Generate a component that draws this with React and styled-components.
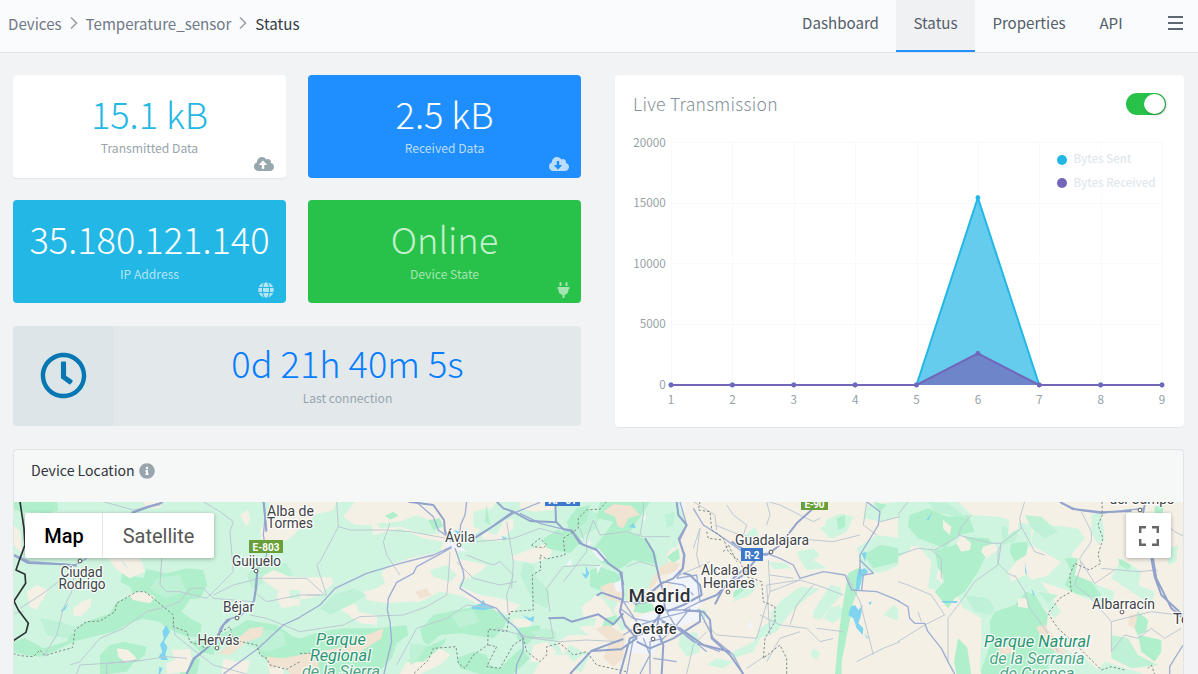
import React from 'react';
import styled, { createGlobalStyle } from 'styled-components';
import {
  FaCloudUploadAlt,
  FaCloudDownloadAlt,
  FaGlobe,
  FaPlug,
  FaRegClock,
  FaInfoCircle,
} from 'react-icons/fa';

const GlobalStyle = createGlobalStyle`
  *, *::before, *::after { box-sizing: border-box; }
  body {
    margin: 0;
    height: 674px;
    overflow: hidden;
    background: #f2f3f5;
    font-family: "Noto Sans CJK SC", "Noto Sans", sans-serif;
    font-size: 15.1px;
    color: #586069;
  }
`;

/* ---------- header ---------- */

const Header = styled.header`
  display: flex;
  justify-content: space-between;
  height: 53px;
  background: #fafbfd;
  border-bottom: 1px solid #e3e5e7;
`;

const Breadcrumb = styled.nav`
  display: flex;
  align-items: center;
  height: 46px;
  padding-left: 8px;
  gap: 8px;
`;

const Crumb = styled.span`
  line-height: 22px;
  color: ${(p) => (p.$current ? '#323a44' : '#6f7985')};
`;

const Chevron = styled.svg`
  width: 8px;
  height: 14px;
  fill: none;
  stroke: #9aa1a9;
  stroke-width: 1.6;
`;

const Tabs = styled.nav`
  display: flex;
`;

const Tab = styled.a`
  width: ${(p) => p.$width}px;
  height: 52px;
  line-height: 45px;
  text-align: center;
  color: #545d68;
  background: ${(p) => (p.$active ? '#f0f1f3' : 'transparent')};
  border-bottom: 2px solid ${(p) => (p.$active ? '#2390fb' : 'transparent')};
`;

const MenuButton = styled.button`
  display: flex;
  flex-direction: column;
  gap: 4px;
  width: 59px;
  padding: 16px 15px 0 29px;
  border: 0;
  background: none;
`;

const MenuBar = styled.span`
  height: 2px;
  background: #5c6772;
`;

/* ---------- dashboard cards ---------- */

const Page = styled.main`
  padding: 22px 14px 0 13px;
`;

const TopRow = styled.section`
  display: flex;
  gap: 34px;
  height: 352px;
`;

const Widgets = styled.div`
  display: grid;
  grid-template-columns: 273px 273px;
  grid-template-rows: 103px 103px 100px;
  column-gap: 22px;
  row-gap: 22px;
  width: 568px;
`;

const StatCard = styled.article`
  position: relative;
  padding-top: 16px;
  border-radius: 4px;
  text-align: center;
  background: ${(p) => p.$bg};
  color: ${(p) => p.$ink};
  box-shadow: ${(p) => (p.$raised ? '0 1px 1px rgba(0, 0, 0, 0.06)' : 'none')};
`;

const Value = styled.div`
  font-size: 36.2px;
  font-weight: 300;
  line-height: 44px;
  color: ${(p) => p.$color || 'inherit'};
`;

const Label = styled.div`
  margin-top: ${(p) => p.$gap ?? 4}px;
  font-size: 12.15px;
  line-height: 18px;
  color: ${(p) => p.$color || '#98a5ac'};
`;

const Corner = styled.span`
  position: absolute;
  right: ${(p) => p.$right}px;
  bottom: ${(p) => p.$bottom}px;
  display: flex;
  color: ${(p) => p.$color};

  svg {
    width: ${(p) => p.$width}px;
    height: 16px;
  }
`;

const LastSeen = styled.article`
  grid-column: 1 / -1;
  display: flex;
  margin-top: 1px;
  height: 100px;
  border-radius: 4px;
  overflow: hidden;
  background: #e3e9eb;
`;

const ClockBox = styled.div`
  display: flex;
  align-items: center;
  justify-content: center;
  width: 101px;
  padding-bottom: 2px;
  background: #dce6e9;
  border-right: 1px solid #dfe5e8;
  color: #0677b3;

  svg {
    width: 47px;
    height: 47px;
  }
`;

const LastSeenText = styled.div`
  flex: 1;
  padding-top: 14px;
  text-align: center;
`;

const ChartCard = styled.article`
  flex: 1;
  border-radius: 4px;
  background: #fff;
  box-shadow: 0 1px 1px rgba(0, 0, 0, 0.06);
`;

const ChartHead = styled.div`
  display: flex;
  align-items: center;
  justify-content: space-between;
  height: 58px;
  padding: 0 18px 0 18px;
`;

const ChartTitle = styled.h2`
  margin: 0;
  font-size: 17.6px;
  font-weight: 300;
  line-height: 24px;
  letter-spacing: 0.25px;
  color: #84919a;
`;

const Switch = styled.span`
  display: flex;
  justify-content: flex-end;
  width: 40px;
  height: 22px;
  padding: 1px;
  border-radius: 11px;
  background: #28c24b;
`;

const Knob = styled.span`
  width: 21px;
  height: 20px;
  border-radius: 50%;
  background: #fff;
  box-shadow: 1px 1px 3px rgba(0, 0, 0, 0.3);
`;

const ChartSvg = styled.svg`
  display: block;
  width: 569px;
  height: 290px;
  font-size: 11.7px;
  fill: #969fa6;
`;

/* ---------- location card ---------- */

const LocationCard = styled.section`
  margin-top: 22px;
  height: 225px;
  border: 1px solid #dfe5e7;
  border-bottom: 0;
  border-radius: 4px 4px 0 0;
  overflow: hidden;
  background: #f6f8f8;
`;

const LocationHead = styled.div`
  display: flex;
  align-items: center;
  gap: 4px;
  height: 52px;
  padding: 0 0 10px 17px;
  font-size: 14.1px;
  line-height: 20px;
  color: #30363b;

  svg {
    width: 16px;
    height: 16px;
    color: #98a5ac;
  }
`;

const HeadText = styled.span`
  height: 22px;
`;

const MapFrame = styled.div`
  position: relative;
  height: 172px;
`;

const MapSvg = styled.svg`
  display: block;
  width: 1169px;
  height: 172px;
  font-family: Roboto, sans-serif;
`;

const MapTypes = styled.div`
  position: absolute;
  top: 11px;
  left: 11px;
  display: flex;
  height: 45px;
  background: #fff;
  border-radius: 2px;
  box-shadow: 0 1px 4px rgba(0, 0, 0, 0.3);
  font-family: Roboto, sans-serif;
  font-size: 20px;
  line-height: 45px;
  text-align: center;
`;

const MapType = styled.button`
  width: ${(p) => p.$width}px;
  padding: 1px 0 0 ${(p) => (p.$active ? 1 : 0)}px;
  border: 0;
  border-left: ${(p) => (p.$active ? '0' : '1px solid #e6e6e6')};
  background: none;
  font: inherit;
  font-weight: ${(p) => (p.$active ? 500 : 400)};
  color: ${(p) => (p.$active ? '#000' : '#565656')};
`;

const Fullscreen = styled.button`
  position: absolute;
  top: 11px;
  right: 12px;
  display: flex;
  align-items: center;
  justify-content: center;
  width: 45px;
  height: 45px;
  padding: 0;
  border: 0;
  border-radius: 2px;
  background: #fff;
  box-shadow: 0 1px 4px rgba(0, 0, 0, 0.3);

  svg {
    width: 20px;
    height: 20px;
    fill: none;
    stroke: #666;
    stroke-width: 2.4;
  }
`;

const Separator = () => (
  <Chevron viewBox="0 0 8 14">
    <path d="M1 1.5 6.5 7 1 12.5" />
  </Chevron>
);

/* ---------- chart ---------- */

const PLOT = { left: 56, right: 547, top: 9.5, bottom: 252 };
const SENT = [0, 0, 0, 0, 0, 15450, 0, 0, 0];
const RECEIVED = [0, 0, 0, 0, 0, 2600, 0, 0, 0];
const px = (i) => PLOT.left + ((PLOT.right - PLOT.left) / 8) * i;
const py = (v) => PLOT.bottom - ((PLOT.bottom - PLOT.top) * v) / 20000;
const line = (d) => d.map((v, i) => `${px(i)},${py(v)}`).join(' ');

const Series = ({ data, color, opacity }) => (
  <g>
    <polygon
      points={`${px(0)},${PLOT.bottom} ${line(data)} ${px(8)},${PLOT.bottom}`}
      fill={color}
      fillOpacity={opacity}
    />
    <polyline points={line(data)} fill="none" stroke={color} strokeWidth="2" />
    {data.map((v, i) => (
      <circle key={i} cx={px(i)} cy={py(v)} r="2.4" fill={color} />
    ))}
  </g>
);

const LiveChart = () => (
  <ChartSvg viewBox="0 0 569 290">
    <g stroke="#f7f9fa" strokeWidth="1">
      {SENT.map((_, i) => (
        <line key={i} x1={Math.round(px(i)) + 0.5} x2={Math.round(px(i)) + 0.5} y1="9" y2="252" />
      ))}
      {[5000, 10000, 15000, 20000].map((v) => (
        <line key={v} x1="56" x2="548" y1={Math.floor(py(v)) + 0.5} y2={Math.floor(py(v)) + 0.5} />
      ))}
    </g>
    <g textAnchor="end">
      {[0, 5000, 10000, 15000, 20000].map((v) => (
        <text key={v} x="50.8" y={py(v) + 4}>{v}</text>
      ))}
    </g>
    <g textAnchor="middle">
      {SENT.map((_, i) => (
        <text key={i} x={px(i)} y="270.6">{i + 1}</text>
      ))}
    </g>
    <Series data={SENT} color="#23b7e5" opacity="0.7" />
    <Series data={RECEIVED} color="#7266ba" opacity="0.7" />
    <rect x="440" y="15" width="104" height="47" fill="#fff" fillOpacity="0.85" />
    <circle cx="447" cy="27" r="5" fill="#23b7e5" />
    <circle cx="447" cy="50" r="5" fill="#7266ba" />
    <g fill="#dfe7ed" fontSize="11.5" fontWeight="500">
      <text x="458.5" y="30">Bytes Sent</text>
      <text x="458.5" y="54">Bytes Received</text>
    </g>
  </ChartSvg>
);

/* ---------- map ---------- */

const MINT = '#cff5e0';
const GREEN = '#b0efcb';
const MID = '#bff1d6';
const SAND = '#f5f0e6';
const TAN = '#f0e3d2';
const WATER = '#7fd4ef';
const URBAN = '#f1f4f8';

/* Each map sheet is drawn on a 900-unit grid at a third of a pixel per unit. */
const SHEETS = [
  {
    x: 0,
    base: MINT,
    areas: [
      [GREEN, 'M40 20H170L175 45 150 55 75 50 40 44Z M365 235 430 250 440 222 500 235 560 220 610 225 622 270 600 310 570 312 545 350 570 370 605 388 600 425 560 425 500 400 480 380 430 372 400 380 340 410 300 420 220 440 160 470 120 485 70 478 40 470V440L75 430 130 460 200 440 220 400 260 380 330 355 350 320 400 300 390 275 362 262Z M640 430 700 400 740 375 830 390 880 425 900 430V480L860 520 800 500 770 460 720 440 660 455Z M300 480 330 450 370 440 440 455 435 480 400 505 380 530 320 537H300Z M570 440 620 430 650 450 640 480 600 470Z M545 500 600 490 590 537H540Z'],
      [MID, 'M120 370 180 380 240 400 200 430 140 420Z M470 250 540 240 560 290 500 310 450 280Z M740 240 780 200 860 205 880 240 800 260 755 280Z M760 400 850 410 860 450 800 470 740 450Z'],
      [SAND, 'M80 290 110 270 145 285 130 310 110 345 90 335Z M220 340 245 320 275 310 272 335 240 365 220 360Z M325 190 420 190 435 230 390 250 350 225Z M385 300 425 288 465 305 450 325 400 315Z M745 45 720 60 740 95 750 75Z M810 20H901V100L870 130 830 150 785 140 780 105 800 70Z M430 20H490L480 38 440 40Z M780 250 820 225 870 245 901 247V285L830 285Z M835 285 870 285 868 310 901 312V330L845 340 830 310Z M350 460 385 465 410 490 380 505 355 485Z M515 465 570 462 575 490 560 530 500 537 500 505 525 495Z M670 490 710 500 750 495 740 537H665Z M800 490 850 505 850 537H810Z M40 90 60 110 70 180 42 150Z'],
      [TAN, 'M695 445 750 400 790 395 785 425 740 440 690 480 655 475Z M800 485 850 490 901 480V537H870L850 515 810 520Z'],
      [WATER, 'M498 390 510 410 492 440 502 455 496 480 504 495 485 495 476 485 487 470 480 450 492 430 487 410Z M478 515 488 520 480 537H476Z M205 325 180 350 195 345Z M360 190 385 220 375 210Z'],
    ],
    minor: 'M310 20 400 45 480 30 M610 20 660 50 700 80 690 110 700 230 620 310 540 290 500 290 480 270 485 190 M640 300 700 270 780 250 900 250 M130 485 170 420 190 340 215 290 225 225 M60 340 130 295 200 240 M210 510 240 500 300 430 370 400 440 350 500 335 540 320 570 280 610 280 640 310 760 320 M40 355 70 350 M230 537 240 510 400 500 500 485 560 490 M750 360 800 370 900 410 M320 537 320 505 420 495 M520 380 525 420 600 480 640 510 740 537 M760 290 800 320 900 300',
    road: 'M395 52 440 35 490 22 M40 178 90 200 180 207 225 210 260 190 M790 20 795 70 790 120 800 180 772 225 770 280 760 320 725 360 680 375 660 400 650 440 620 460 580 490 560 537 M900 367 850 390 775 460 720 500 670 537',
    heavy: 'M395 54 445 36 485 24 M40 180 85 204 190 208 230 212 M791 20 796 70 799 110 M772 228 766 290 762 320 M690 372 670 390 652 430 M620 460 582 492 560 537',
    border: 'M60 20 66 60 72 100 75 150 60 190 48 225 75 238 77 265 42 318 55 345 85 385 78 412 40 437',
    dash: 'M40 475 60 482 100 485 120 465 135 482 180 468 218 458 225 405 260 380 300 378 345 350 350 325 410 290 435 290 460 310 520 360 520 395 560 410 570 440 620 460 655 415 690 395 700 435 770 450 780 480 800 490 810 510 860 523 900 500',
  },
  {
    x: 300,
    base: MINT,
    areas: [
      [SAND, 'M0 20H110L100 45 40 60 30 95 0 100Z M130 65 165 20H590L560 60 545 130 600 140 640 100 640 70 560 90 520 120 490 125 470 190 560 210 540 230 505 250 470 270 540 300 600 310 660 330 630 360 590 350 540 330 480 300 420 290 360 320 310 320 260 325 200 315 190 290 230 280 255 265 245 235 270 210 330 190 420 170 430 140 370 130 300 100 260 110 220 120 215 90 165 90Z M0 247 95 247 100 265 60 300 20 312 0 312Z M118 310 170 330 175 350 232 362 230 390 180 385 125 345Z M700 160 740 145 755 165 750 185 700 205 640 195 630 185Z M810 400 880 390 870 420 890 440 860 460 800 460 780 440 820 430Z M700 450 740 440 770 470 740 500 690 500Z M660 20H770L760 45 700 50 660 40Z M350 480 420 460 450 480 420 510 360 537H300L320 500Z M740 480 860 480 820 520 850 537H700L720 500Z M640 370 700 375 690 395 640 395Z'],
      [MINT, 'M230 85 300 80 350 60 400 80 420 115 380 120 300 95 240 100Z M390 225 440 210 470 240 450 260 400 245Z M520 50 560 40 620 60 590 120 520 95Z'],
      [GREEN, 'M0 430 60 410 130 400 230 400 320 390 325 420 290 445 275 490 230 537H0Z M360 405 400 360 470 345 560 330 625 370 610 400 580 430 480 415 420 420 385 450 370 440Z M740 125 770 105 830 110 825 150 790 175 770 150 730 140Z M655 400 720 390 720 410 680 450 650 430Z M255 62 280 50 295 62 270 74Z M385 75 420 70 430 95 400 105Z M560 30 570 90 555 80Z M470 490 520 470 560 480 570 510 600 520 640 480 665 460 690 490 640 537H540L480 520Z M320 500 370 460 440 430 430 450 370 500Z'],
      [MID, 'M60 340 100 300 160 280 200 300 150 330 90 360Z M330 445 380 450 350 500 330 510Z M700 210 710 250 750 290 740 340 700 320 660 240 670 200Z M690 410 740 400 800 420 740 440Z M450 355 520 345 540 380 480 400Z'],
      [TAN, 'M130 455 200 420 250 400 245 430 180 470 90 475 50 485 60 537H0V480Z M345 290 380 280 395 300 360 312Z'],
      [WATER, 'M515 335 545 325 550 313 558 332 590 338 550 345 515 342Z M668 360 690 370 702 362 700 382 685 375Z M605 122 620 130 612 137Z M460 105 480 110 475 120Z'],
      [URBAN, 'M435 130 470 140 500 170 460 165 440 155Z M800 205 815 190 812 212Z'],
    ],
    minor: 'M110 20 115 95 60 200 50 210 80 300 20 300 M0 250 20 250 70 295 M115 95 150 105 260 105 330 110 440 130 M270 85 250 140 260 180 300 240 M500 180 550 200 580 210 600 200 640 240 620 300 625 360 M530 140 640 130 720 100 790 120 M620 80 630 140 640 200 635 280 M450 170 445 250 440 300 380 335 310 360 180 365 130 390 0 410 M290 510 350 400 440 370 500 330 580 340 M880 75 860 130 860 170 790 260 M840 100 850 130 M790 215 850 210 900 212 M790 215 740 280 750 350 M750 370 760 430 660 425 M590 400 700 430 780 440 860 435 960 440 M0 300 60 300 M470 200 520 250 600 270 650 260',
    road: 'M0 366 60 330 105 280 200 235 300 205 400 180 455 155 M455 158 350 215 340 235 290 262 265 310 262 345 270 380 275 440 265 480 252 537 M465 160 490 230 492 250 480 280 550 325 590 340 620 375 645 395 668 425 670 465 650 510 648 537 M350 22 400 65 415 105 450 130 M500 20 495 60 482 90 478 130 M525 130 570 100 640 55 700 30 720 22 M660 55 720 85 780 100 815 105 850 150 890 163',
    heavy: 'M325 20 400 30 432 75 435 110 455 140 M525 128 575 96 640 50 M590 20 610 40 640 50 690 78 770 82 M766 20 768 80 790 103 815 108 840 145 890 165 925 205 960 230 970 270 M745 370 790 368 815 380 895 358 940 388 970 355 M890 302 905 293 970 315 M810 537 875 467 970 432 M875 468 960 463',
    dash: 'M920 20 900 42 860 45 835 70 835 100 790 130 795 180 740 192 720 180 722 225 697 240 700 345 630 350 620 410 565 402 563 450 520 480 495 520 475 505 468 455 400 460 385 495 340 537 M565 450 590 455 560 515 600 520 640 450 670 430 680 470 720 500 740 480 740 455 780 445 820 480 860 470 890 510 980 530 M695 150 720 130 740 150 730 158 700 155Z M0 475 30 475 60 495',
  },
  {
    x: 600,
    base: SAND,
    areas: [
      [MINT, 'M0 20H120L110 60 120 100 180 150 210 205 170 260 130 290 70 320 0 300Z M120 20H240L250 110 200 180 160 150 130 110Z M140 20H245L255 90 230 160 180 150 120 100Z M425 130 465 95 475 120 450 145Z M505 200 560 205 570 220 520 222Z M590 170 640 160 660 180 640 195 680 220 620 225 600 195Z M410 300 480 260 450 300 400 320Z M545 315 580 290 600 275 660 280 620 310 570 355 530 410 480 430 460 470 400 490 400 470 460 440 480 400 510 380 515 350Z M690 340 720 330 730 360 700 385 670 370Z M640 350 690 270 720 275 725 300 680 350 660 375 640 370Z M680 75 720 55 760 65 740 110 700 130 675 100Z M660 100 700 85 720 120 690 130Z M770 160 830 120 900 130V210L840 235 790 225Z M240 420 290 410 300 470 260 485 235 450Z M290 340 320 345 315 375 290 370Z M640 460 660 475 650 495 630 480Z M350 490 400 500 370 520 320 510Z M800 30 900 20V60L850 80 790 70Z M850 360 880 330 900 345V380Z'],
      [GREEN, 'M790 180 840 150 900 160V200L820 220Z M745 235 780 215 790 250 760 320 745 400 725 500 725 537H705L715 430 725 350Z M710 70 735 60 735 95 715 105Z M195 90 215 80 222 105 205 115Z M110 320 150 310 165 345 130 355 100 350Z M200 185 235 160 240 190 220 205Z M400 290 440 265 440 280 400 310Z M820 20 860 30 840 50Z'],
      [TAN, 'M180 215 210 200 240 205 225 235 185 240 150 285 140 260Z'],
      [URBAN, 'M205 240 230 225 245 245 300 250 310 320 290 345 310 370 250 390 220 410 190 390 180 440 160 480 80 470 75 440 110 420 90 380 140 355 190 350 160 330 185 290 220 280Z M455 170 500 160 530 175 500 195 470 190Z M380 250 440 245 400 280 370 275Z M440 390 455 380 460 405Z M130 135 145 130 150 155 135 155Z M230 20 260 25 250 55Z'],
      [WATER, 'M775 225 795 220 805 232 785 245 778 285 767 285 770 250Z M752 335 765 330 775 345 788 330 782 365 775 385 790 400 788 420 770 400 760 370 745 360Z M792 415 808 432 800 428Z M785 175 800 170 795 200Z M805 325 815 318 812 330Z'],
    ],
    minor: 'M280 20 345 60 350 105 M505 20 540 30 600 60 640 80 660 70 M500 90 510 60 500 20 M345 90 420 120 480 130 M430 120 440 90 400 60 380 30 M600 255 500 270 510 420 M510 290 600 255 650 270 730 300 M505 195 510 290 470 430 350 420 310 380 M480 360 540 390 620 400 660 440 700 430 M570 390 590 330 640 270 M300 220 290 180 300 100 280 160 M240 240 330 200 M510 240 580 250 M500 500 540 430 600 410 M740 240 780 320 800 400 820 480 M770 500 850 460 900 440 M840 80 900 65 M580 130 700 140 780 120 M320 410 280 450 260 537 M-20 75 0 120 80 110 130 125 210 125 M130 20 130 60 120 120 M730 410 650 400 M440 520 500 480 M800 20 790 90 830 120 M80 215 120 200 170 215',
    road: 'M240 20 260 90 235 130 255 180 250 220 230 250 M280 40 310 90 350 115 400 150 M400 150 440 180 500 175 540 190 580 210 600 250 670 230 735 240 755 285 830 290 880 310 900 320 M800 20 840 50 835 90 780 180 780 240 M780 195 820 235 790 240 785 285 M70 420 120 390 180 370 260 350 300 345 M300 350 340 430 400 480 430 537 M110 420 110 380 70 320 M230 250 290 240 300 320 250 345 190 345 M175 370 250 410 320 470 M100 430 80 537 M130 430 150 480 120 537 M190 430 150 440 150 537 M160 490 230 500 M60 340 100 370 150 380 M200 350 230 400 280 440 360 470 M270 340 230 390 180 440 M65 250 70 320 130 325 180 300 M140 300 190 260 250 270 280 300',
    heavy: 'M135 130 160 170 178 250 190 290 195 345 M230 20 235 60 260 90 238 135 252 180 248 220 220 250 185 265 145 300 105 330 M65 230 70 300 60 350 75 390 110 430 60 465 M180 350 170 400 190 450 185 537 M250 235 270 240 300 270 305 300 250 330 200 350 M250 345 310 350 330 375 335 430 390 480 430 537 M180 360 140 410 90 430 60 537 M185 380 240 400 310 450 390 470 M345 328 370 280 430 240 470 190 M300 320 350 300 400 250 440 215 M500 180 540 150 590 85 640 40 M395 140 440 170 500 180 M110 440 150 460 220 430 300 380 300 345',
    dash: 'M300 20 295 45 330 50 335 105 370 130 385 170 420 200 440 245 485 260 490 320 525 335 525 380 495 430 490 490 540 450 560 490 560 537 M370 170 385 150 410 200 M320 110 325 130 370 135',
  },
  {
    x: 898,
    base: SAND,
    areas: [
      [MINT, 'M0 20H180L220 60 300 65 400 90 400 150 330 230 340 260 380 240 450 240 490 200 470 190 400 150 405 110 460 90 540 100 560 130 520 180 540 200 530 240 600 270 650 290 640 330 560 310 520 290 430 260 490 350 470 370 420 320 400 360 450 430 530 480 620 500 740 537H245L250 440 190 330 160 250 130 290 90 280 100 200 60 150 0 190Z M580 60 610 50 620 130 600 150 580 110Z M670 190 730 230 720 270 770 290 760 330 700 290 640 250Z M810 160 840 150 835 200 810 210Z M600 310 640 320 600 345Z'],
      [GREEN, 'M35 60 90 40 150 65 210 60 230 110 180 120 140 160 60 130 30 95Z M110 165 170 150 200 125 270 130 300 160 260 190 240 230 200 290 170 310 150 340 110 290 140 260 120 220Z M290 350 350 330 385 290 410 300 450 360 445 400 480 450 440 537H245L280 440 275 380Z M500 190 540 190 530 240 580 260 610 300 590 310 530 295 500 270 520 230Z M340 145 390 140 385 180 350 200 335 170Z M720 350 750 375 745 410 720 420 700 380Z M720 420 790 435 790 470 770 500 730 470Z M180 430 210 460 220 537H175L168 500Z M770 35 795 30 795 65 770 60Z M660 190 700 210 690 225 665 210Z'],
      [MID, 'M90 20 150 25 210 70 160 60 110 50Z M200 300 270 310 290 340 280 360 230 350Z M380 60 430 65 480 110 440 130 400 100Z M640 420 690 430 720 480 780 510 700 520 640 490Z M310 90 360 110 350 140 315 150Z M420 290 480 300 450 325Z'],
      [SAND, 'M385 195 410 205 455 205 455 240 400 255 380 230Z M335 60 365 55 360 100 330 120Z M135 75 160 95 155 120 135 100Z M190 120 220 145 215 165 190 170 175 145Z M255 155 290 145 300 165 265 190 250 170Z M40 150 70 165 65 200 40 210 30 180Z M120 220 135 240 130 265 115 250Z M360 310 385 310 390 340 360 335Z M200 340 250 370 250 440 235 480 250 537H220L205 440 185 400Z M560 490 620 500 600 525Z'],
      [TAN, 'M415 395 440 390 480 440 520 490 470 470 430 430Z M695 360 720 355 710 400 690 390Z M300 455 340 450 350 475 310 480Z'],
      [WATER, 'M103 50 85 75 92 75Z M380 200 387 240 382 235Z M400 278 412 303 405 300Z M130 318 178 318 178 324 135 323Z'],
    ],
    minor: 'M0 60 30 20 M0 180 60 160 110 165 180 125 190 95 220 60 M180 120 280 145 310 145 M380 20 365 70 370 100 310 145 300 170 300 205 330 235 350 245 M310 145 300 210 230 260 195 310 150 370 150 500 M370 95 410 170 440 180 M350 240 380 290 395 340 440 400 480 470 M550 50 580 110 580 140 545 190 550 210 530 270 570 300 640 380 760 350 840 360 M610 220 720 230 780 225 M550 200 590 265 650 225 M795 80 830 110 860 125 M80 390 140 360 100 300 30 270 0 260 M60 350 70 380 M100 165 130 190 130 250 M640 380 640 430 640 470 680 420 720 430 760 400 800 430 850 400 M0 440 80 390',
    road: 'M0 318 30 335 35 370 50 385 80 385 90 410 130 460 150 500 170 537 M490 25 540 45 610 55 690 45 740 40 M855 450 815 515 815 537',
    heavy: 'M485 20 525 42 610 52 700 48 M765 190 775 250 795 290 820 340 850 365 M760 190 770 245 790 300 855 360 M740 30 735 55',
    dash: 'M612 20 613 60 600 90 615 130 600 180 608 205 575 225 530 205 515 240 520 290 485 310 450 355 480 400 545 460 610 525 640 515 680 525 M750 520 760 510 770 537',
  },
];

/* Sierra de Guadarrama and the western outskirts of Madrid, across two sheets. */
const SIERRA = {
  x: 480,
  areas: [
    [MINT, 'M240 20H600L590 100 560 180 530 230 500 280 460 330 430 300 400 345 440 400 420 410 370 370 330 370 300 400 340 430 320 470 280 500 230 440 220 300 240 200Z'],
    [SAND, 'M305 335 350 300 370 315 390 340 420 400 440 440 450 500 440 540H300L330 480 270 450 250 480 230 440 270 420 330 420 350 370 310 365Z'],
    [MID, 'M270 60 320 40 360 60 350 100 300 130 270 110Z M555 60 585 50 580 90 560 100Z'],
    [GREEN, 'M360 20H510L485 60 450 110 490 130 530 180 530 208 460 195 415 225 360 200 340 160 380 110 400 80 350 70Z M330 225 360 215 415 235 425 265 370 290 330 275Z M190 130 240 110 285 100 300 145 270 175 200 160Z M365 400 375 370 410 360 410 385 380 405Z M290 40 330 30 320 80 270 110 260 80Z'],
    [TAN, 'M370 50 400 28 455 32 480 60 445 70 430 100 412 92 405 65Z M360 275 395 262 430 285 430 325 375 310Z M345 400 385 390 435 420 430 490 400 515 370 490 390 440Z'],
    [MINT, 'M420 228 465 197 530 210 510 270 460 292 430 262Z'],
    [URBAN, 'M335 165 355 160 380 190 365 200 345 180Z M258 210 275 190 273 214Z M485 65 498 60 495 80Z M350 215 365 210 352 238Z M315 130 335 145 320 155Z M400 265 425 255 430 290 410 290Z'],
    [WATER, 'M305 235 318 238 317 212 328 235 318 252Z M447 97 459 84 468 99Z'],
  ],
};

const Grid = ({ x, children }) => (
  <g transform={`translate(${x} 495) scale(0.33333)`} fill="none" strokeLinejoin="round">
    {children}
  </g>
);

const Land = ({ sheet }) => (
  <Grid x={sheet.x}>
    {sheet.base && <path d="M0 0H901V540H0Z" fill={sheet.base} />}
    {sheet.areas.map(([color, d], i) => (
      <path key={i} d={d} fill={color} />
    ))}
  </Grid>
);

const Roads = ({ sheet }) => (
  <Grid x={sheet.x}>
    <path d={sheet.minor} stroke="#bcc9d2" strokeWidth="3" />
    <path d={sheet.road} stroke="#9eaed3" strokeWidth="4" />
    <path d={sheet.heavy} stroke="#92a3cb" strokeWidth="6" />
    <path d={sheet.dash} stroke="#7d8a87" strokeWidth="3" strokeDasharray="7 6" />
    {sheet.border && <path d={sheet.border} stroke="#2c3333" strokeWidth="5" />}
  </Grid>
);

const PLACES = [
  ['Alba de', 290.5, 516, 47],
  ['Tormes', 290, 528, 46],
  ['Guijuelo', 256.5, 566, 49],
  ['Ciudad', 81.5, 577, 42],
  ['Rodrigo', 82, 588.5, 47],
  ['Béjar', 238.5, 612, 31],
  ['Hervás', 218.5, 645, 42],
  ['Ávila', 460, 542, 30],
  ['Guadalajara', 772, 545, 74],
  ['Alcala de', 729, 575, 56],
  ['Henares', 729, 587.5, 52],
  ['Albarracín', 1123.5, 609, 63],
  ['Teruel', 1193, 624, 40],
  ['del Campo', 1142, 504, 65],
];

const PARKS = [
  ['Parque', 341, 645, 50, '#2a9470'],
  ['Regional', 340.5, 661, 61, '#2a9470'],
  ['de la Sierra', 341, 677, 78, '#4aa584'],
  ['Parque Natural', 1037, 647, 106, '#2a9470'],
  ['de la Serranía', 1037, 664, 95, '#4aa584'],
  ['de Cuenca', 1037, 679, 75, '#4aa584'],
];

const SHIELDS = [
  ['E-803', 249, 540, 34, '#689f38'],
  ['E-90', 801, 497, 27, '#689f38'],
  ['R-2', 741, 548, 22, '#3d77c9'],
  ['AP-61', 545, 493, 35, '#3d77c9'],
];

const TOWNS = [
  [80, 561], [256, 571], [237, 618], [217, 648], [459, 545], [771, 552], [728, 592], [653, 639], [1122, 612], [1140, 510],
];

const LocationMap = () => (
  <MapSvg viewBox="14 502 1169 172">
    {SHEETS.map((sheet) => (
      <Land key={sheet.x} sheet={sheet} />
    ))}
    <Land sheet={SIERRA} />
    {SHEETS.map((sheet) => (
      <Roads key={sheet.x} sheet={sheet} />
    ))}
    <g fill="#fff" stroke="#555" strokeWidth="1">
      {TOWNS.map(([x, y]) => (
        <circle key={`${x}-${y}`} cx={x} cy={y} r="1.9" />
      ))}
    </g>
    {SHIELDS.map(([name, x, y, w, color]) => (
      <g key={name}>
        <rect x={x} y={y} width={w} height="13" fill={color} />
        <text x={x + w / 2} y={y + 10.5} fill="#fff" fontSize="10" fontWeight="700" textAnchor="middle" textLength={w - 7}>
          {name}
        </text>
      </g>
    ))}
    <g textAnchor="middle" stroke="#fff" strokeOpacity="0.85" strokeWidth="2.5" strokeLinejoin="round" paintOrder="stroke">
      {PLACES.map(([name, x, y, w]) => (
        <text key={name} x={x} y={y} fill="#3f4347" fontSize="14" textLength={w} lengthAdjust="spacingAndGlyphs">
          {name}
        </text>
      ))}
      {PARKS.map(([name, x, y, w, color]) => (
        <text key={name} x={x} y={y} fill={color} fontSize="16.4" fontStyle="italic" textLength={w} lengthAdjust="spacingAndGlyphs">
          {name}
        </text>
      ))}
      <text x="659.5" y="602" fill="#303438" fontSize="19" fontWeight="500" textLength="62">Madrid</text>
      <text x="654.5" y="634" fill="#303438" fontSize="14" fontWeight="500" textLength="44">Getafe</text>
    </g>
    <circle cx="659.5" cy="609.5" r="3.6" fill="#fff" stroke="#000" strokeWidth="2" />
    <circle cx="659.5" cy="609.5" r="1.6" fill="#000" />
  </MapSvg>
);

export default function App() {
  return (
    <>
      <GlobalStyle />
      <Header>
        <Breadcrumb>
          <Crumb>Devices</Crumb>
          <Separator />
          <Crumb>Temperature_sensor</Crumb>
          <Separator />
          <Crumb $current>Status</Crumb>
        </Breadcrumb>
        <Tabs>
          <Tab $width={111}>Dashboard</Tab>
          <Tab $width={79} $active>Status</Tab>
          <Tab $width={108}>Properties</Tab>
          <Tab $width={56}>API</Tab>
          <MenuButton aria-label="Menu">
            <MenuBar />
            <MenuBar />
            <MenuBar />
          </MenuButton>
        </Tabs>
      </Header>
      <Page>
        <TopRow>
          <Widgets>
            <StatCard $bg="#fff" $ink="#23b7e5" $raised>
              <Value>15.1 kB</Value>
              <Label>Transmitted Data</Label>
              <Corner $right={12} $bottom={6} $width={20} $color="#98a6ad"><FaCloudUploadAlt /></Corner>
            </StatCard>
            <StatCard $bg="#1f8fff" $ink="#fff">
              <Value>2.5 kB</Value>
              <Label $color="#bcdcfb">Received Data</Label>
              <Corner $right={12} $bottom={6} $width={20} $color="#bcdcfb"><FaCloudDownloadAlt /></Corner>
            </StatCard>
            <StatCard $bg="#23b7e5" $ink="#fff">
              <Value>35.180.121.140</Value>
              <Label $gap={5} $color="#b3e5f5">IP Address</Label>
              <Corner $right={12} $bottom={5} $width={16} $color="#b3e5f5"><FaGlobe /></Corner>
            </StatCard>
            <StatCard $bg="#28c24b" $ink="#c4efcd">
              <Value>Online</Value>
              <Label $gap={5} $color="#a5e5b2">Device State</Label>
              <Corner $right={11} $bottom={5} $width={13} $color="#a5e5b2"><FaPlug /></Corner>
            </StatCard>
            <LastSeen>
              <ClockBox><FaRegClock /></ClockBox>
              <LastSeenText>
                <Value $color="#077dff">0d 21h 40m 5s</Value>
                <Label $gap={5}>Last connection</Label>
              </LastSeenText>
            </LastSeen>
          </Widgets>
          <ChartCard>
            <ChartHead>
              <ChartTitle>Live Transmission</ChartTitle>
              <Switch role="switch" aria-checked="true"><Knob /></Switch>
            </ChartHead>
            <LiveChart />
          </ChartCard>
        </TopRow>
        <LocationCard>
          <LocationHead>
            <HeadText>Device Location</HeadText>
            <FaInfoCircle />
          </LocationHead>
          <MapFrame>
            <LocationMap />
            <MapTypes>
              <MapType $width={77} $active>Map</MapType>
              <MapType $width={112}>Satellite</MapType>
            </MapTypes>
            <Fullscreen aria-label="Toggle fullscreen view">
              <svg viewBox="0 0 20 20">
                <path d="M1.2 7V1.2H7M13 1.2H18.8V7M18.8 13V18.8H13M7 18.8H1.2V13" />
              </svg>
            </Fullscreen>
          </MapFrame>
        </LocationCard>
      </Page>
    </>
  );
}
